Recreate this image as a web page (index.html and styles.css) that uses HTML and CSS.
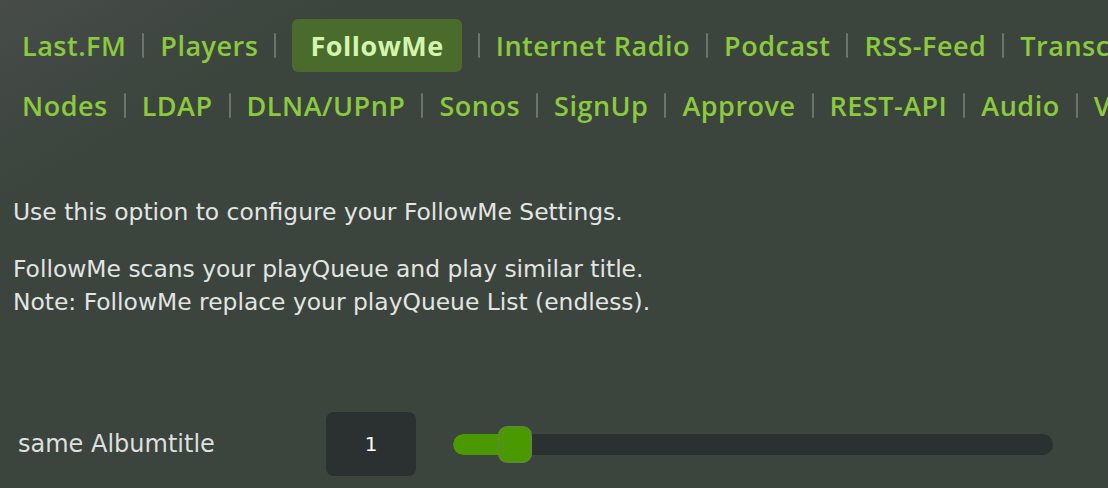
FILE: index.html
```html
<!DOCTYPE html>
<html lang="en">

<head>
    <meta charset="UTF-8">
    <meta name="viewport" content="width=device-width, initial-scale=1.0">
    <title>FollowMe Settings</title>
    <link rel="stylesheet" href="styles.css">
</head>

<body>
    <div id="content">
        <div class="menu">
            <div class="menu-row">
                <a class="menu-link" href="#">Last.FM</a><span class="menu-sep"></span>
                <a class="menu-link" href="#">Players</a><span class="menu-sep"></span>
                <a class="menu-link active" href="#">FollowMe</a><span class="menu-sep"></span>
                <a class="menu-link" href="#">Internet Radio</a><span class="menu-sep"></span>
                <a class="menu-link" href="#">Podcast</a><span class="menu-sep"></span>
                <a class="menu-link" href="#">RSS-Feed</a><span class="menu-sep"></span>
                <a class="menu-link" href="#">Transcoding</a>
            </div>
            <div class="menu-row">
                <a class="menu-link" href="#">Nodes</a><span class="menu-sep"></span>
                <a class="menu-link" href="#">LDAP</a><span class="menu-sep"></span>
                <a class="menu-link" href="#">DLNA/UPnP</a><span class="menu-sep"></span>
                <a class="menu-link" href="#">Sonos</a><span class="menu-sep"></span>
                <a class="menu-link" href="#">SignUp</a><span class="menu-sep"></span>
                <a class="menu-link" href="#">Approve</a><span class="menu-sep"></span>
                <a class="menu-link" href="#">REST-API</a><span class="menu-sep"></span>
                <a class="menu-link" href="#">Audio</a><span class="menu-sep"></span>
                <a class="menu-link" href="#">Video</a>
            </div>
        </div>

        <div class="intro">
            <p class="first">Use this option to configure your FollowMe Settings.</p>
            <p>FollowMe scans your playQueue and play similar title.<br>
                Note: FollowMe replace your playQueue List (endless).</p>
        </div>

        <div class="settings">
            <div class="setting">
                <span class="setting-label">same Albumtitle</span>
                <span class="value-box">1</span>
                <div class="slider">
                    <div class="slider-fill" style="width: 62px"></div>
                    <div class="slider-thumb" style="left: 45px"></div>
                </div>
            </div>
            <div class="setting">
                <span class="setting-label">same Artist</span>
                <span class="value-box">1</span>
                <div class="slider">
                    <div class="slider-fill" style="width: 62px"></div>
                    <div class="slider-thumb" style="left: 45px"></div>
                </div>
            </div>
        </div>
    </div>
</body>

</html>
```

FILE: styles.css
```css
html,
body {
    height: 100%;
}

body {
    margin: 0;
    overflow: hidden;
    background: #3b443d linear-gradient(150deg, #474c49 0, #3b443d 180px);
    font-family: "DejaVu Sans", "Open Sans", sans-serif;
}

/* top navigation */
.menu {
    padding: 19px 0 0 22px;
}

.menu-row {
    display: flex;
    align-items: center;
    height: 53px;
    white-space: nowrap;
}

.menu-row + .menu-row {
    margin-top: 7px;
}

.menu-link {
    color: #8bc93d;
    font-family: "Open Sans", sans-serif;
    font-size: 27px;
    font-weight: 600;
    letter-spacing: 0.5px;
    text-decoration: none;
    flex: none;
}

.menu-link.active {
    height: 53px;
    line-height: 53px;
    padding: 0 18px;
    border-radius: 6px;
    background-color: #4a6b2c;
    color: #d3f6ae;
    font-weight: 700;
}

.menu-sep {
    flex: none;
    width: 2px;
    height: 25px;
    margin: 0 16px;
    border-radius: 1px;
    background-color: #6b756d;
}

/* description */
.intro {
    margin: 64px 0 0 13px;
    color: #e3e5e3;
    font-size: 23.4px;
    line-height: 33px;
}

.intro p {
    margin: 24px 0 0;
}

.intro p.first {
    margin-top: 0;
}

/* settings rows */
.settings {
    margin-top: 93px;
}

.setting {
    display: flex;
    align-items: center;
    height: 64px;
    padding-left: 18px;
    margin-bottom: 12px;
}

.setting-label {
    flex: 0 0 308px;
    color: #dedfde;
    font-size: 24px;
}

.value-box {
    flex: none;
    width: 90px;
    height: 64px;
    line-height: 64px;
    border-radius: 8px;
    background-color: #2b3030;
    color: #ffffff;
    font-size: 20px;
    text-align: center;
}

.slider {
    position: relative;
    flex: none;
    width: 600px;
    height: 21px;
    margin-left: 37px;
    border-radius: 11px;
    background-color: #2b3030;
}

.slider-fill {
    height: 100%;
    border-radius: 11px 0 0 11px;
    background-color: #4a9900;
}

.slider-thumb {
    position: absolute;
    top: -8px;
    width: 30px;
    height: 33px;
    border: 2px solid #5b8a2f;
    border-radius: 9px;
    background-color: #4a9900;
}
```
